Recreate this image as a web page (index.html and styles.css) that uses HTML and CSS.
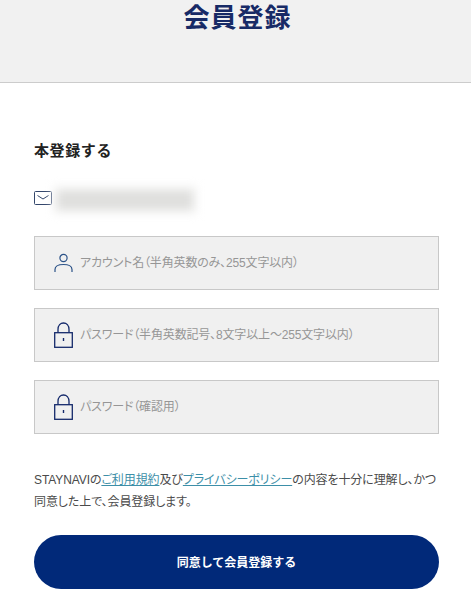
FILE: index.html
```html
<!DOCTYPE html>
<html lang="ja">
<head>
<meta charset="utf-8">
<title>会員登録</title>
<link rel="stylesheet" href="styles.css">
</head>
<body>
<header class="page-head"><h1 class="page-title">会員登録</h1></header>
<main class="content">
  <h2 class="section-title">本登録する</h2>
  <div class="email-row">
    <svg class="mail-icon" viewBox="0 0 18 14" width="18" height="14" aria-hidden="true"><rect x="0.5" y="0.5" width="17" height="13" rx="1" fill="none" stroke="#33466b"/><path d="M3.5 4.5 L9 8 L14.5 4.5" fill="none" stroke="#33466b"/></svg>
    <div class="email-blur"></div>
  </div>
  <form class="fields">
    <label class="field">
      <svg class="field-icon" viewBox="0 0 19 20" width="19" height="20" aria-hidden="true"><circle cx="9.5" cy="5" r="3.6" fill="none" stroke="#2b5288" stroke-width="1.2"/><path d="M1 19 V16.5 C1 13 4.5 11.5 9.5 11.5 C14.5 11.5 18 13 18 16.5 V19" fill="none" stroke="#2b5288" stroke-width="1.2"/></svg>
      <span class="placeholder">アカウント名（半角英数のみ、255文字以内）</span>
    </label>
    <label class="field">
      <svg class="field-icon" viewBox="0 0 19 26" width="19" height="26" aria-hidden="true"><path d="M4 10.5 V7.5 C4 3.5 6.5 1 9.5 1 C12.5 1 15 3.5 15 7.5 V10.5" fill="none" stroke="#14296b" stroke-width="1.3"/><rect x="0.7" y="10.7" width="17.6" height="14.6" fill="none" stroke="#14296b" stroke-width="1.3"/><rect x="8.8" y="16" width="1.4" height="3" fill="#14296b"/></svg>
      <span class="placeholder">パスワード（半角英数記号、8文字以上〜255文字以内）</span>
    </label>
    <label class="field">
      <svg class="field-icon" viewBox="0 0 19 26" width="19" height="26" aria-hidden="true"><path d="M4 10.5 V7.5 C4 3.5 6.5 1 9.5 1 C12.5 1 15 3.5 15 7.5 V10.5" fill="none" stroke="#14296b" stroke-width="1.3"/><rect x="0.7" y="10.7" width="17.6" height="14.6" fill="none" stroke="#14296b" stroke-width="1.3"/><rect x="8.8" y="16" width="1.4" height="3" fill="#14296b"/></svg>
      <span class="placeholder">パスワード（確認用）</span>
    </label>
  </form>
  <p class="terms">STAYNAVIの<a href="#">ご利用規約</a>及び<a href="#">プライバシーポリシー</a>の内容を十分に理解し、かつ同意した上で、会員登録します。</p>
  <button class="submit" type="button">同意して会員登録する</button>
</main>
</body>
</html>
```

FILE: styles.css
```css
* { box-sizing: border-box; }
html, body { margin: 0; padding: 0; }
body {
  background: #fff;
  font-family: "Liberation Sans", "Noto Sans CJK JP", sans-serif;
  color: #333;
  overflow: hidden;
  height: 601px;
}
.page-head {
  height: 83px;
  background: #f1f1f1;
  border-bottom: 1px solid #ccc;
  padding-left: 4px;
  text-align: center;
}
.page-title {
  margin: 0;
  font-size: 26px;
  line-height: 36px;
  font-weight: 700;
  letter-spacing: 1px;
  color: #172a66;
}
.content { padding: 58px 32px 0 34px; }
.section-title {
  margin: 0;
  font-size: 15px;
  line-height: 20px;
  font-weight: 700;
  letter-spacing: 0.6px;
  color: #222;
}
.email-row {
  display: flex;
  align-items: center;
  gap: 6px;
  margin-top: 25px;
  height: 24px;
}
.mail-icon { flex: none; }
.email-blur {
  width: 134px;
  height: 18px;
  margin-top: 4px;
  background: #dfdfdd;
  box-shadow: 0 0 0 5px #f4f4f3;
  filter: blur(4px);
}
.fields {
  display: flex;
  flex-direction: column;
  gap: 18px;
  margin-top: 26px;
}
.field {
  display: flex;
  align-items: center;
  gap: 7px;
  height: 54px;
  padding-left: 19px;
  background: #f0f0f0;
  border: 1px solid #c8c8c8;
}
.field-icon { flex: none; }
.placeholder {
  margin-top: -3px;
  font-size: 12px;
  letter-spacing: -0.16px;
  color: #969696;
  font-feature-settings: "palt";
}
.terms {
  margin: 35px 0 0;
  font-size: 12px;
  line-height: 22px;
  letter-spacing: -0.1px;
  color: #4a4a4a;
  font-feature-settings: "palt";
}
.terms a { color: #3d8fa8; }
.submit {
  display: block;
  width: 100%;
  height: 54px;
  margin-top: 22px;
  padding-bottom: 2px;
  border: 0;
  border-radius: 27px;
  background: #012979;
  color: #fff;
  font-family: inherit;
  font-size: 12px;
  font-weight: 700;
}
```
